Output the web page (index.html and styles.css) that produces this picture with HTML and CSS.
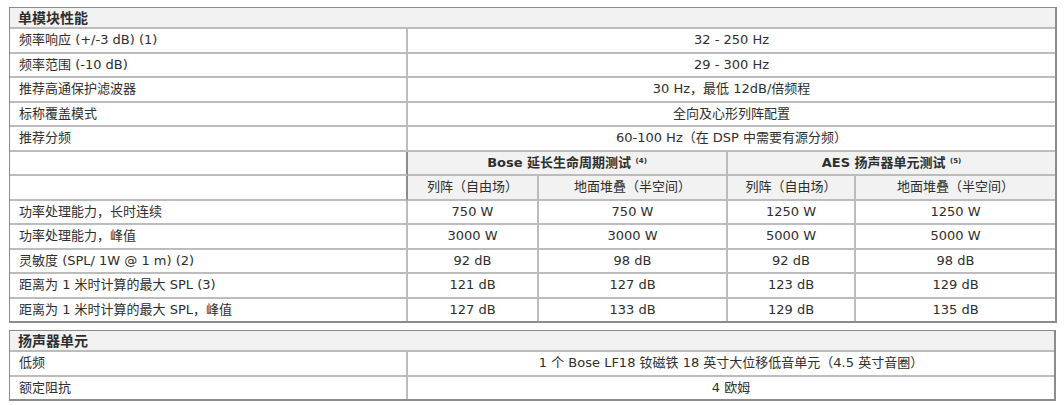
FILE: index.html
```html
<!DOCTYPE html>
<html lang="zh-CN">
<head>
<meta charset="utf-8">
<link rel="stylesheet" href="styles.css">
</head>
<body>
<div class="page">
<table class="spec">
  <colgroup>
    <col class="c-label"><col class="c-a"><col class="c-b"><col class="c-c"><col class="c-d">
  </colgroup>
  <tr class="head"><th colspan="5">单模块性能</th></tr>
  <tr><td class="lab">频率响应 (+/-3 dB) (1)</td><td colspan="4">32 - 250 Hz</td></tr>
  <tr><td class="lab">频率范围 (-10 dB)</td><td colspan="4">29 - 300 Hz</td></tr>
  <tr><td class="lab">推荐高通保护滤波器</td><td colspan="4">30 Hz，最低 12dB/倍频程</td></tr>
  <tr><td class="lab">标称覆盖模式</td><td colspan="4">全向及心形列阵配置</td></tr>
  <tr><td class="lab">推荐分频</td><td colspan="4">60-100 Hz（在 DSP 中需要有源分频）</td></tr>
  <tr><td class="lab"></td><td colspan="2" class="grp">Bose 延长生命周期测试 <sup>(4)</sup></td><td colspan="2" class="grp">AES 扬声器单元测试 <sup>(5)</sup></td></tr>
  <tr><td class="lab"></td><td class="sub">列阵（自由场）</td><td class="sub">地面堆叠（半空间）</td><td class="sub">列阵（自由场）</td><td class="sub">地面堆叠（半空间）</td></tr>
  <tr><td class="lab">功率处理能力，长时连续</td><td>750 W</td><td>750 W</td><td>1250 W</td><td>1250 W</td></tr>
  <tr><td class="lab">功率处理能力，峰值</td><td>3000 W</td><td>3000 W</td><td>5000 W</td><td>5000 W</td></tr>
  <tr><td class="lab">灵敏度 (SPL/ 1W @ 1 m) (2)</td><td>92 dB</td><td>98 dB</td><td>92 dB</td><td>98 dB</td></tr>
  <tr><td class="lab">距离为 1 米时计算的最大 SPL (3)</td><td>121 dB</td><td>127 dB</td><td>123 dB</td><td>129 dB</td></tr>
  <tr><td class="lab">距离为 1 米时计算的最大 SPL，峰值</td><td>127 dB</td><td>133 dB</td><td>129 dB</td><td>135 dB</td></tr>
</table>
<table class="spec second">
  <colgroup>
    <col class="c-label"><col class="c-rest">
  </colgroup>
  <tr class="head"><th colspan="2">扬声器单元</th></tr>
  <tr><td class="lab">低频</td><td>1 个 Bose LF18 钕磁铁 18 英寸大位移低音单元（4.5 英寸音圈）</td></tr>
  <tr><td class="lab">额定阻抗</td><td>4 欧姆</td></tr>
</table>
</div>
</body>
</html>
```

FILE: styles.css
```css
html, body {
  margin: 0;
  padding: 0;
  background: #ffffff;
}
.page {
  padding: 7px 8px 0 9px;
  display: flex;
  flex-direction: column;
  gap: 7px;
  font-family: "DejaVu Sans", "Noto Sans CJK SC", sans-serif;
  font-size: 13px;
  color: #2e2e2e;
}
.spec {
  width: 1047px;
  border-collapse: separate;
  border-spacing: 0;
  border: 1px solid #8c8c8c;
  border-right-width: 2px;
  border-bottom-width: 2px;
  table-layout: fixed;
}
.c-label { width: 398px; }
.c-a { width: 131px; }
.c-b { width: 189px; }
.c-c { width: 128px; }
.c-d { width: 199px; }
.spec th, .spec td {
  padding: 0;
  height: 22.5px;
  text-align: center;
  border-right: 2px solid #bcbcbc;
  border-bottom: 2px solid #bcbcbc;
  font-weight: 400;
  line-height: 16px;
  white-space: nowrap;
}
.spec tr > :last-child { border-right: none; }
.spec tr:last-child > * { border-bottom: none; }
.spec .head th {
  text-align: left;
  background: #f2f2f2;
  font-weight: 600;
  font-size: 14px;
  padding-left: 8px;
  height: 19px;
}
.spec td.lab {
  text-align: left;
  padding-left: 9px;
}
.spec td.grp, .spec td.sub {
  background: #f2f2f2;
}
.spec td.grp {
  font-weight: 700;
}
.spec sup {
  font-size: 7px;
  vertical-align: 4px;
  line-height: 0;
}
.spec tr:nth-child(7) td.lab,
.spec tr:nth-child(8) td.lab { border-right-color: #8c8c8c; }
```
